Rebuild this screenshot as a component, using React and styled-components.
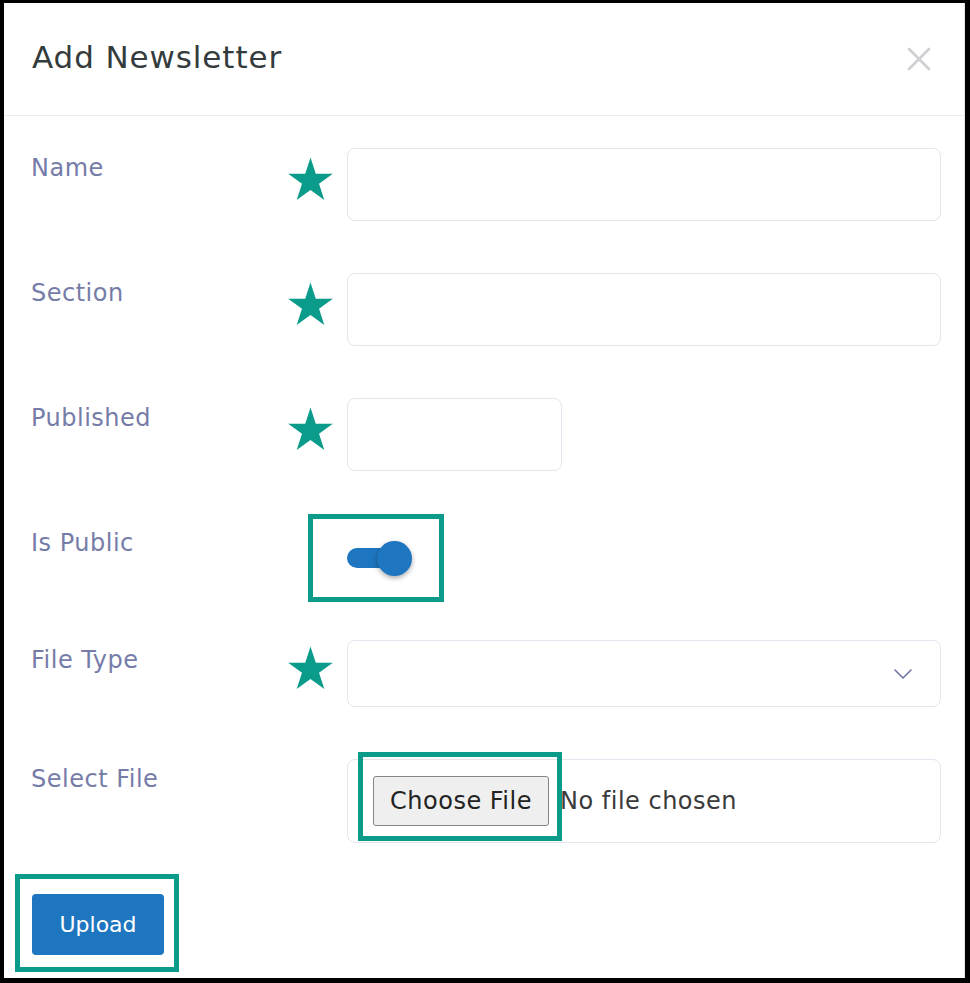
import styled, { createGlobalStyle } from "styled-components";

const GlobalStyle = createGlobalStyle`
  body {
    margin: 0;
    background: #ffffff;
    font-family: "DejaVu Sans", "Open Sans", sans-serif;
  }
  * {
    box-sizing: border-box;
  }
`;

const TEAL = "#0a9b8a";
const BLUE = "#1f76c0";

const StarIcon = () => (
  <svg width="47" height="45" viewBox="0 0 48 46">
    <polygon
      fill={TEAL}
      points="24,0.5 29.39,17.08 46.83,17.08 32.72,27.33 38.11,43.92 24,33.67 9.89,43.92 15.28,27.33 1.17,17.08 18.61,17.08"
    />
  </svg>
);

const CloseIcon = () => (
  <svg width="24" height="24" viewBox="0 0 24 24">
    <path d="M2 2 L22 22 M22 2 L2 22" stroke="#cfcfd3" strokeWidth="2.6" strokeLinecap="round" />
  </svg>
);

const ChevronIcon = () => (
  <svg width="18" height="10" viewBox="0 0 18 10">
    <path d="M1 1 L9 9 L17 1" fill="none" stroke="#6e74a3" strokeWidth="1.6" strokeLinecap="round" strokeLinejoin="round" />
  </svg>
);

const App = () => {
  return (
    <>
      <GlobalStyle />
      <Frame>
        <Modal>
          <Header>
            <Title>Add Newsletter</Title>
            <CloseButton aria-label="Close">
              <CloseIcon />
            </CloseButton>
          </Header>
          <Body>
            <FieldRow>
              <Label>Name</Label>
              <Required>
                <StarIcon />
              </Required>
              <TextBox $height={73} />
            </FieldRow>
            <FieldRow>
              <Label>Section</Label>
              <Required>
                <StarIcon />
              </Required>
              <TextBox $height={73} />
            </FieldRow>
            <FieldRow>
              <Label>Published</Label>
              <Required>
                <StarIcon />
              </Required>
              <TextBox $height={73} $width={215} />
            </FieldRow>
            <FieldRow $height={65}>
              <Label>Is Public</Label>
              <span />
              <Highlight $top={18} $inset="-27px -32px -26px -39px">
                <Toggle>
                  <Track />
                  <Knob />
                </Toggle>
              </Highlight>
            </FieldRow>
            <FieldRow>
              <Label>File Type</Label>
              <Required>
                <StarIcon />
              </Required>
              <SelectBox>
                <ChevronIcon />
              </SelectBox>
            </FieldRow>
            <FieldRow>
              <Label>Select File</Label>
              <span />
              <FileBox>
                <Highlight $inset="-24px -13px -15px -15px">
                  <ChooseButton>Choose File</ChooseButton>
                </Highlight>
                <NoFile>No file chosen</NoFile>
              </FileBox>
            </FieldRow>
          </Body>
          <Footer>
            <Highlight $inset="-20px -15px -17px -17px">
              <UploadButton>Upload</UploadButton>
            </Highlight>
          </Footer>
        </Modal>
      </Frame>
    </>
  );
};

const Frame = styled.div`
  width: 970px;
  height: 983px;
  border-style: solid;
  border-color: #000000;
  border-width: 3px 5px 5px 4px;
  overflow: hidden;
`;

const Modal = styled.div`
  height: 100%;
  background: #ffffff;
  border-right: 1px solid #e6e6ea;
  display: flex;
  flex-direction: column;
`;

const Header = styled.div`
  height: 113px;
  display: flex;
  align-items: center;
  justify-content: space-between;
  padding: 0 33px 4px 28px;
  border-bottom: 1px solid #ececf0;
`;

const Title = styled.h1`
  margin: 0;
  font-size: 31px;
  font-weight: 400;
  letter-spacing: 0.9px;
  color: #343b3d;
`;

const CloseButton = styled.button`
  background: none;
  border: none;
  padding: 0;
  display: flex;
  margin-top: 4px;
`;

const Body = styled.div`
  display: flex;
  flex-direction: column;
  gap: 52px;
  padding: 32px 23px 0 27px;
`;

const FieldRow = styled.div`
  display: grid;
  grid-template-columns: 256px 60px 1fr;
  align-items: start;
  height: ${(p) => (p.$height ? `${p.$height}px` : "auto")};
`;

const Label = styled.label`
  font-size: 24px;
  line-height: 33px;
  letter-spacing: 0.5px;
  padding-top: 4px;
  color: #767ca8;
`;

const Required = styled.div`
  align-self: center;
  display: flex;
  margin-top: -11px;
`;

const TextBox = styled.input`
  height: ${(p) => p.$height}px;
  width: ${(p) => (p.$width ? `${p.$width}px` : "100%")};
  border: 1.5px solid #e4e5ee;
  border-radius: 8px;
  background: #ffffff;
  outline: none;
`;

const SelectBox = styled.div`
  height: 67px;
  border: 1.5px solid #e4e5ee;
  border-radius: 8px;
  display: flex;
  align-items: center;
  justify-content: flex-end;
  padding-right: 28px;
`;

const FileBox = styled.div`
  height: 84px;
  border: 1.5px solid #e4e5ee;
  border-radius: 8px;
  display: flex;
  align-items: center;
  padding-left: 25px;
  gap: 9px;
`;

const Highlight = styled.div`
  position: relative;
  display: inline-flex;
  justify-self: start;
  margin-top: ${(p) => (p.$top ? `${p.$top}px` : "0")};

  &::after {
    content: "";
    position: absolute;
    inset: ${(p) => p.$inset};
    border: 5px solid ${TEAL};
    pointer-events: none;
  }
`;

const Toggle = styled.div`
  position: relative;
  width: 65px;
  height: 35px;
`;

const Track = styled.div`
  position: absolute;
  left: 0;
  top: 7px;
  width: 52px;
  height: 20px;
  border-radius: 10px;
  background: ${BLUE};
`;

const Knob = styled.div`
  position: absolute;
  right: 0;
  top: 0;
  width: 35px;
  height: 35px;
  border-radius: 50%;
  background: ${BLUE};
  box-shadow: 0 2px 5px rgba(0, 0, 0, 0.35);
`;

const ChooseButton = styled.button`
  width: 176px;
  height: 50px;
  background: #efefef;
  border: 1px solid #858585;
  border-radius: 3px;
  font-family: "DejaVu Sans", "Open Sans", sans-serif;
  font-size: 24px;
  letter-spacing: 0.5px;
  color: #222222;
  padding: 0;
`;

const NoFile = styled.span`
  font-size: 24px;
  letter-spacing: 0.5px;
  color: #3a3a3a;
  margin-left: 2px;
`;

const Footer = styled.div`
  padding: 51px 0 0 28px;
`;

const UploadButton = styled.button`
  width: 132px;
  height: 61px;
  background: ${BLUE};
  border: none;
  border-radius: 4px;
  color: #ffffff;
  font-family: "DejaVu Sans", "Open Sans", sans-serif;
  font-size: 22px;
  font-weight: 400;
`;

export default App;
